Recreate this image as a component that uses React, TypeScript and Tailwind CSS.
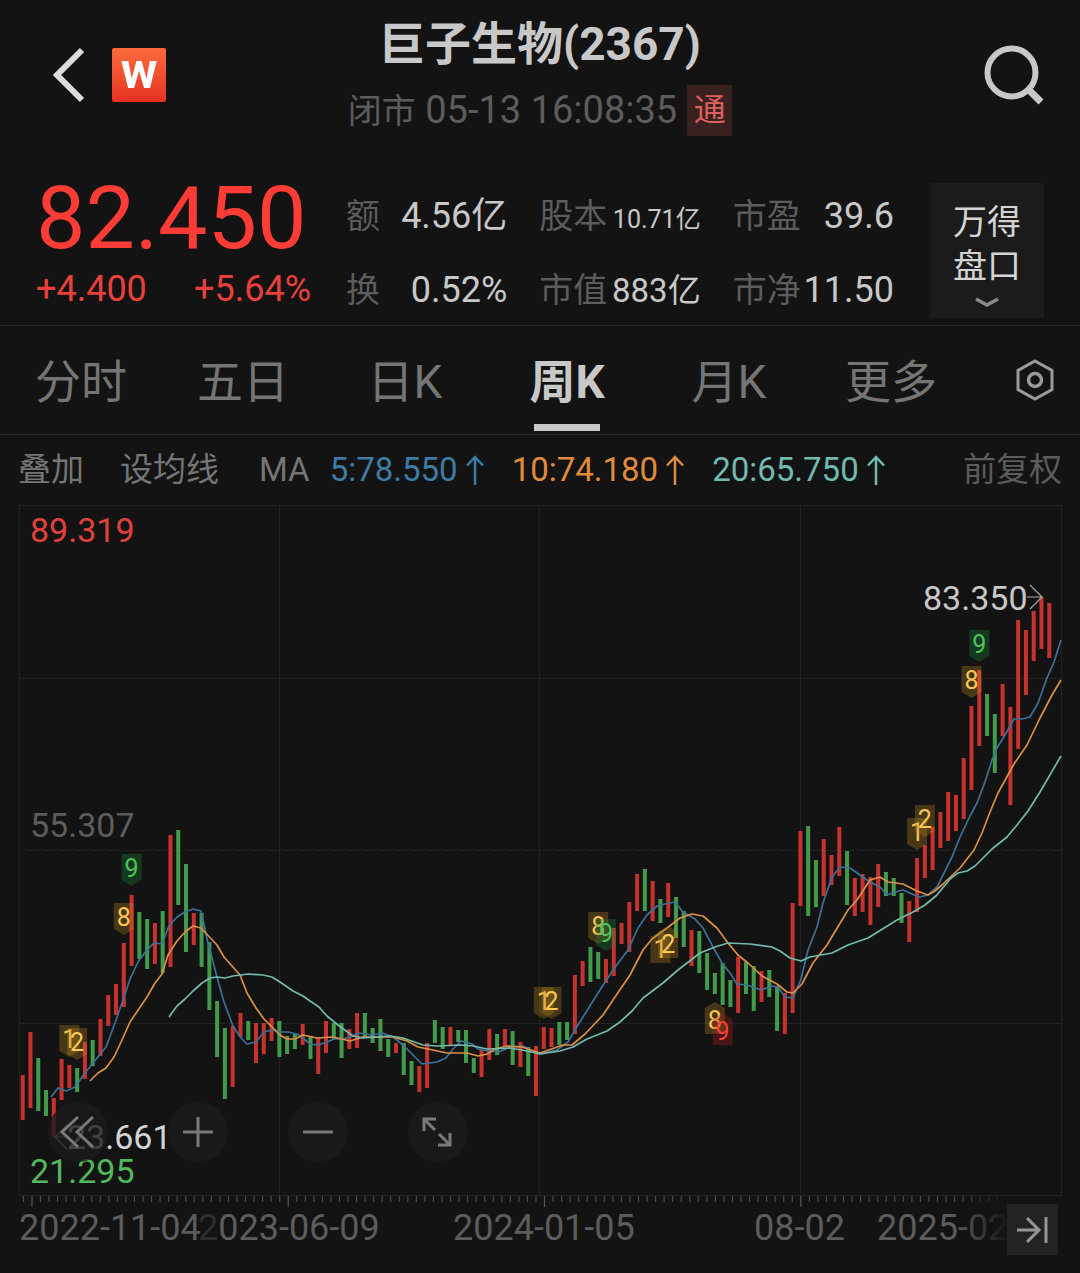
import React, { useState } from 'react';

type Candle = ['r' | 'g', number, number];

interface Marker {
  index: number;
  y: number;
  label: string;
  tone: 'gold' | 'green' | 'red';
  up?: boolean;
}

interface Stat {
  label: string;
  value: string;
  size?: string;
}

const stats: Stat[] = [
  { label: '额', value: '4.56亿' },
  { label: '股本', value: '10.71亿', size: 'text-[25px]' },
  { label: '市盈', value: '39.6' },
  { label: '换', value: '0.52%' },
  { label: '市值', value: '883亿', size: 'text-[33px]' },
  { label: '市净', value: '11.50' },
];

const tabs = ['分时', '五日', '日K', '周K', '月K', '更多'];

// Plot geometry, in viewBox units
const FIRST_X = 22.7;
const STEP = 7.777;
const TICK_START = 23.4;
const TICK_STEP = 8.543;

// [colour, high, low] per week
const candles: Candle[] = [
  ['r', 1075, 1120], ['r', 1032, 1108], ['g', 1058, 1111], ['g', 1090, 1116], ['r', 1098, 1137],
  ['r', 1059, 1100], ['r', 1065, 1088], ['g', 1068, 1092], ['r', 1042, 1079], ['g', 1040, 1066],
  ['r', 1019, 1056], ['r', 995, 1026], ['r', 984, 1015], ['r', 943, 1007], ['r', 895, 966],
  ['g', 912, 959], ['g', 919, 969], ['r', 923, 964], ['g', 911, 973], ['r', 835, 967],
  ['g', 830, 905], ['g', 864, 952], ['r', 913, 945], ['g', 913, 967], ['g', 942, 1010],
  ['g', 1001, 1057], ['g', 1028, 1099], ['r', 1026, 1087], ['r', 1013, 1037], ['g', 1021, 1040],
  ['r', 1023, 1063], ['r', 1023, 1054], ['r', 1018, 1041], ['g', 1021, 1057], ['g', 1036, 1054],
  ['g', 1034, 1049], ['r', 1024, 1045], ['g', 1036, 1059], ['r', 1037, 1074], ['r', 1021, 1053],
  ['g', 1023, 1039], ['g', 1023, 1058], ['r', 1029, 1049], ['r', 1013, 1048], ['g', 1013, 1037],
  ['g', 1028, 1043], ['g', 1019, 1051], ['g', 1039, 1057], ['r', 1043, 1053], ['g', 1043, 1075],
  ['g', 1061, 1085], ['r', 1066, 1092], ['r', 1043, 1088], ['g', 1020, 1043], ['g', 1027, 1049],
  ['r', 1027, 1045], ['g', 1030, 1042], ['g', 1030, 1063], ['g', 1058, 1073], ['r', 1050, 1077],
  ['r', 1029, 1060], ['g', 1034, 1055], ['r', 1029, 1047], ['g', 1031, 1065], ['r', 1042, 1067],
  ['g', 1047, 1076], ['r', 1046, 1096], ['r', 1027, 1049], ['r', 1028, 1047], ['g', 1022, 1045],
  ['g', 1022, 1040], ['r', 975, 1034], ['r', 961, 986], ['g', 947, 982], ['g', 952, 979],
  ['r', 959, 983], ['r', 928, 976], ['r', 923, 944], ['r', 902, 952], ['r', 874, 911],
  ['g', 869, 911], ['r', 881, 921], ['g', 899, 923], ['r', 883, 917], ['g', 897, 938],
  ['g', 911, 947], ['r', 930, 966], ['g', 931, 973], ['g', 953, 990], ['g', 973, 994],
  ['g', 963, 1005], ['g', 980, 1007], ['r', 957, 1013], ['g', 962, 994], ['g', 966, 1011],
  ['r', 971, 1002], ['g', 970, 997], ['g', 986, 1031], ['r', 993, 1034], ['r', 903, 1013],
  ['r', 831, 906], ['g', 826, 916], ['g', 860, 907], ['r', 839, 896], ['r', 855, 885],
  ['r', 827, 876], ['g', 851, 905], ['r', 878, 916], ['r', 874, 912], ['r', 877, 925],
  ['r', 864, 907], ['g', 872, 896], ['g', 878, 896], ['g', 893, 923], ['r', 901, 942],
  ['r', 858, 912], ['r', 845, 878], ['r', 827, 870], ['r', 812, 848], ['r', 792, 841],
  ['r', 795, 831], ['r', 758, 819], ['r', 706, 790], ['r', 670, 746], ['g', 694, 736],
  ['g', 714, 773], ['r', 684, 736], ['r', 707, 805], ['r', 620, 749], ['r', 630, 695],
  ['r', 611, 661], ['r', 597, 649], ['r', 603, 658],
];

const ma5 =
  '51,1097 58,1088 66,1091 75,1087 85,1073 93,1063 106,1047 115,1023 123,1000 130,979 138,962 146,951 154,943 162,944 169,926 177,917 185,912 193,909 201,911 208,943 217,977 224,1002 233,1026 241,1038 247,1044 256,1042 264,1032 272,1030 280,1032 288,1032 297,1034 303,1038 310,1044 318,1045 327,1042 334,1039 343,1039 352,1036 359,1033 372,1035 382,1033 393,1037 403,1045 413,1055 422,1064 437,1062 446,1058 453,1049 461,1041 472,1044 478,1049 487,1051 499,1052 510,1047 523,1046 532,1051 540,1054 557,1050 568,1042 578,1025 598,993 613,970 628,950 638,928 647,915 657,906 665,904 675,902 683,912 695,919 703,928 713,947 722,963 730,973 737,984 747,985 761,990 772,986 778,987 785,997 793,998 801,979 808,950 817,927 823,903 832,877 840,867 850,868 860,875 870,882 880,887 887,895 895,892 903,890 912,894 919,897 928,895 937,887 943,875 952,857 960,837 970,816 977,803 985,782 992,760 997,748 1005,735 1014,719 1022,719 1030,717 1038,703 1047,678 1054,662 1061,640';
const ma10 =
  '90,1081 98,1073 106,1068 114,1057 122,1040 130,1022 147,997 155,983 162,974 168,955 177,941 185,932 193,926 201,928 217,945 224,957 240,975 247,993 256,1008 264,1019 272,1027 280,1035 287,1039 295,1039 303,1035 317,1038 333,1037 350,1041 363,1037 393,1037 407,1041 418,1047 433,1050 447,1053 467,1053 478,1056 487,1054 495,1049 507,1046 522,1047 540,1053 563,1045 572,1045 585,1034 603,1015 617,994 630,975 643,950 652,939 667,928 680,918 692,914 703,916 717,928 728,943 738,955 748,963 762,976 777,984 787,992 793,993 802,984 813,963 827,945 848,910 857,900 870,880 880,877 888,882 903,884 917,891 928,895 935,891 943,884 960,868 974,850 982,833 990,812 998,793 1014,764 1027,745 1040,718 1052,695 1061,680';
const ma20 =
  '169,1017 177,1006 185,999 193,991 202,983 210,978 217,977 225,978 233,976 248,974 263,975 272,977 280,982 293,991 303,996 310,1001 319,1007 327,1016 338,1025 353,1036 363,1038 390,1036 403,1038 423,1045 437,1046 460,1045 473,1046 487,1049 510,1048 527,1051 540,1054 560,1051 573,1047 587,1039 607,1031 620,1022 632,1011 643,998 663,983 678,970 700,953 715,947 728,943 750,944 772,947 780,951 790,958 801,961 810,957 832,953 848,945 868,938 897,920 913,912 925,905 937,895 950,879 958,873 967,871 975,866 992,849 1007,837 1017,825 1028,811 1040,792 1061,756';

const markers: Marker[] = [
  { index: 6, y: 1025, label: '1', tone: 'gold' },
  { index: 7, y: 1028, label: '2', tone: 'gold' },
  { index: 13, y: 903, label: '8', tone: 'gold' },
  { index: 14, y: 854, label: '9', tone: 'green' },
  { index: 67, y: 987, label: '1', tone: 'gold' },
  { index: 68, y: 987, label: '2', tone: 'gold' },
  { index: 74, y: 912, label: '8', tone: 'gold' },
  { index: 75, y: 919, label: '9', tone: 'green' },
  { index: 82, y: 931, label: '1', tone: 'gold', up: true },
  { index: 83, y: 926, label: '2', tone: 'gold', up: true },
  { index: 89, y: 1002, label: '8', tone: 'gold', up: true },
  { index: 90, y: 1013, label: '9', tone: 'red', up: true },
  { index: 115, y: 818, label: '1', tone: 'gold' },
  { index: 116, y: 805, label: '2', tone: 'gold' },
  { index: 122, y: 666, label: '8', tone: 'gold' },
  { index: 123, y: 630, label: '9', tone: 'green' },
];

const tones = {
  gold: { text: '#fbc858', fill: '#b98520' },
  green: { text: '#4cc35c', fill: '#1c8a3a' },
  red: { text: '#f04038', fill: '#b81e1e' },
};

const ticks = Array.from({ length: 115 }, (_, i) => i);

const UpArrow = () => (
  <svg className="w-[18px] h-[30px] ml-2" viewBox="0 0 18 30" fill="none" stroke="currentColor" strokeWidth="2.5">
    <path d="M9 30V2M1 10.5L9 2l8 8.5" />
  </svg>
);

const Header = () => (
  <header className="grid grid-cols-[1fr_auto_1fr] items-center pt-[14px] px-9">
    <div className="flex items-center gap-7 pl-4">
      <button aria-label="返回">
        <svg className="w-8 h-14" viewBox="0 0 32 56" fill="none" stroke="#dcdcdc" strokeWidth="6">
          <path d="M30 3L5 28L30 53" />
        </svg>
      </button>
      <button
        aria-label="万得"
        className="w-[54px] h-[54px] rounded-[2px] bg-gradient-to-b from-[#fb6a3c] to-[#e62e22] text-white text-[50px] leading-[40px] font-bold pb-2"
      >
        w
      </button>
    </div>
    <div className="text-center">
      <h1 className="text-[46px] leading-[60px] font-bold text-[#c8c8c8]">巨子生物(2367)</h1>
      <div className="mt-[11px] h-[51px] flex items-center justify-center gap-[10px] text-[#5c5c5c]">
        <p className="text-[38px] leading-[51px] whitespace-nowrap">
          <span className="text-[34px]">闭市</span> 05-13 16:08:35
        </p>
        <span className="w-[45px] h-[51px] bg-[#3b2020] text-[#d9625f] text-[32px] leading-[51px]">通</span>
      </div>
    </div>
    <button aria-label="搜索" className="justify-self-end">
      <svg className="w-[60px] h-[60px]" viewBox="0 0 60 60" fill="none" stroke="#c8c8c8" strokeWidth="6">
        <circle cx="27.500" cy="27.500" r="24" />
        <path d="M44 44L57 57" strokeWidth="7" />
      </svg>
    </button>
  </header>
);

const Quote = () => (
  <section className="flex items-start pt-9 pb-[7px] pr-9 border-b border-[#262626]">
    <div className="w-[346px] pt-[6px] pl-9 text-[#fd3c36]">
      <p className="text-[88px] leading-[80px]">82.450</p>
      <p className="mt-[11px] w-[275px] flex justify-between text-[36px] leading-[40px] text-[#e8403b]">
        <span>+4.400</span>
        <span>+5.64%</span>
      </p>
    </div>
    <dl className="flex-1 grid grid-cols-3 gap-x-8 gap-y-[34px] pt-6">
      {stats.map((stat) => (
        <div key={stat.label} className="flex justify-between items-baseline h-10 leading-[40px] whitespace-nowrap">
          <dt className="text-[34px] text-[#5c5c5c]">{stat.label}</dt>
          <dd className={`text-[#c8c8c8] ${stat.size || 'text-[36px]'}`}>{stat.value}</dd>
        </div>
      ))}
    </dl>
    <button className="ml-9 mt-[11px] w-[114px] pt-[17px] pb-[11px] bg-[#1b1b1b] text-[#d4d4d4] text-[34px] leading-[44px] flex flex-col items-center">
      <span>万得</span>
      <span>盘口</span>
      <svg className="mt-[9px] w-6 h-[10px]" viewBox="0 0 24 10" fill="none" stroke="#8a8a8a" strokeWidth="3.500">
        <path d="M1 2l11 6 11-6" />
      </svg>
    </button>
  </section>
);

const PeriodTabs = () => {
  const [active, setActive] = useState('周K');

  return (
    <nav className="flex items-center border-b border-[#2b2b2b]">
      {tabs.map((tab) => (
        <button
          key={tab}
          onClick={() => setActive(tab)}
          className={`w-[15%] pt-7 pb-[3px] flex flex-col items-center text-[46px] leading-[56px] ${
            active === tab ? 'font-bold text-[#c8c8c8]' : 'text-[#757575]'
          }`}
        >
          {tab}
          <span className={`mt-[14px] w-[66px] h-[7px] ${active === tab ? 'bg-[#c8c8c8]' : ''}`} />
        </button>
      ))}
      <button aria-label="设置" className="flex-1 flex justify-center pl-[18px]">
        <svg className="w-[38px] h-[42px]" viewBox="0 0 38 42" fill="none" stroke="#9a9a9a" strokeWidth="3">
          <path d="M19 2l17 9.500v19L19 40 2 30.500v-19z" />
          <circle cx="19" cy="21" r="6.500" strokeWidth="3.500" />
        </svg>
      </button>
    </nav>
  );
};

const Averages = () => (
  <div className="h-[65px] px-[18px] pt-1 flex items-center text-[33px] leading-[48px] text-[#757575] whitespace-nowrap">
    <button>叠加</button>
    <button className="ml-9">设均线</button>
    <span className="ml-10">MA</span>
    <span className="ml-5 flex items-center text-[#3f7ba3]">5:78.550<UpArrow /></span>
    <span className="ml-7 flex items-center text-[#e08c3c]">10:74.180<UpArrow /></span>
    <span className="ml-7 flex items-center text-[#72bab0]">20:65.750<UpArrow /></span>
    <button className="ml-auto text-[#5c5c5c]">前复权</button>
  </div>
);

const MarkerFlag = ({ index, y, label, tone, up }: Marker) => {
  const x = FIRST_X + index * STEP;
  const d = up
    ? `M${x - 10} ${y + 6}L${x} ${y}L${x + 10} ${y + 6}V${y + 32}H${x - 10}Z`
    : `M${x - 10} ${y}H${x + 10}V${y + 26}L${x} ${y + 32}L${x - 10} ${y + 26}Z`;
  return (
    <g>
      <path d={d} fill={tones[tone].fill} fillOpacity="0.32" />
      <text x={x} y={y + (up ? 27 : 23)} fontSize="25" textAnchor="middle" fill={tones[tone].text}>
        {label}
      </text>
    </g>
  );
};

const KLineChart = () => (
  <svg className="block w-full" viewBox="0 500 1080 773" role="img" aria-label="周K线图">
    <defs>
      <linearGradient id="tail" gradientUnits="userSpaceOnUse" x1="955" y1="0" x2="1003" y2="0">
        <stop offset="0" stopColor="#5c5c5c" />
        <stop offset="1" stopColor="#5c5c5c" stopOpacity="0.1" />
      </linearGradient>
    </defs>

    {/* Grid */}
    <g stroke="#222222" fill="none">
      <rect x="19.500" y="505.500" width="1042" height="690" />
      <path d="M279.500 505V1195M539.500 505V1195M800.500 505V1195M19 678.500H1061M19 1023.500H1061" />
      <path d="M27 850.500H1061" strokeDasharray="12 4" />
    </g>

    {/* Time axis ticks, fading out at the right end */}
    {ticks.map((i) => {
      const x = TICK_START + i * TICK_STEP;
      const major = i % 30 === 1;
      return (
        <path
          key={i}
          d={`M${x} 1196V${major ? 1207 : 1202}`}
          stroke={major ? '#555555' : '#4a4a4a'}
          strokeWidth="1.200"
          opacity={Math.min(1, (1010 - x) / 50)}
        />
      );
    })}

    {/* Weekly bars */}
    {candles.map(([color, high, low], i) => (
      <rect
        key={i}
        x={FIRST_X + i * STEP - 2}
        y={high}
        width="4"
        height={low - high}
        fill={color === 'r' ? '#c6332e' : '#429b4b'}
      />
    ))}

    {/* Moving averages */}
    <g fill="none" strokeWidth="1.700" strokeLinejoin="round">
      <polyline points={ma5} stroke="#3b7199" />
      <polyline points={ma10} stroke="#dd8f45" />
      <polyline points={ma20} stroke="#72bab0" />
    </g>

    {markers.map((marker) => (
      <MarkerFlag key={marker.index} {...marker} />
    ))}

    {/* High and low callouts */}
    <g stroke="#a8a8a8" strokeWidth="1.200" fill="none">
      <path d="M1027 597H1042M1030 585L1042 597L1030 609" />
      <path d="M68 1137H55M67 1125L55 1137L67 1149" />
    </g>
    <g fontSize="34">
      <text x="923" y="610" fill="#c8c8c8">83.350</text>
      <text x="67" y="1149" fill="#d4d4d4">23.661</text>
      <text x="30" y="542" fill="#e0413c">89.319</text>
      <text x="30" y="837" fill="#5c5c5c">55.307</text>
      <text x="30" y="1183" fill="#52b85e">21.295</text>
    </g>

    <g fontSize="36" fill="#5c5c5c">
      <text x="19" y="1240">2022-11-04</text>
      <text x="198" y="1240"><tspan fillOpacity="0.4">2</tspan>023-06-09</text>
      <text x="453" y="1240">2024-01-05</text>
      <text x="754" y="1240">08-02</text>
      <text x="877" y="1240" fill="url(#tail)">2025-02</text>
    </g>
  </svg>
);

const controls = [
  { label: '向左', path: 'M30 15L14 30L30 45M45 15L29 30L45 45' },
  { label: '放大', path: 'M30 15V45M15 30H45' },
  { label: '缩小', path: 'M15 30H45' },
  { label: '全屏', path: 'M16 29V17H28M16 17L27 28M42 31V43H30M42 43L31 32' },
];

const App: React.FC = () => {
  return (
    <main className="min-h-screen bg-[#131313] font-[Roboto,'Noto_Sans_CJK_SC',sans-serif]">
      <Header />
      <Quote />
      <PeriodTabs />
      <Averages />
      <div className="relative">
        <KLineChart />
        {/* Floating chart controls */}
        <div className="absolute left-12 bottom-[111px] flex gap-[60px]">
          {controls.map((control) => (
            <button key={control.label} aria-label={control.label} className="w-[60px] h-[60px] rounded-full bg-[#1b1b1b]/80">
              <svg viewBox="0 0 60 60" fill="none" stroke="#7a7a7a" strokeWidth="3">
                <path d={control.path} />
              </svg>
            </button>
          ))}
        </div>
        <button aria-label="最新" className="absolute right-[22px] bottom-[18px] w-[51px] h-[51px] bg-[#232323]">
          <svg viewBox="0 0 51 51" fill="none" stroke="#969696" strokeWidth="3">
            <path d="M10 26H31M20 14L32 26L20 38M39 13V39" />
          </svg>
        </button>
      </div>
    </main>
  );
};

export default App;
